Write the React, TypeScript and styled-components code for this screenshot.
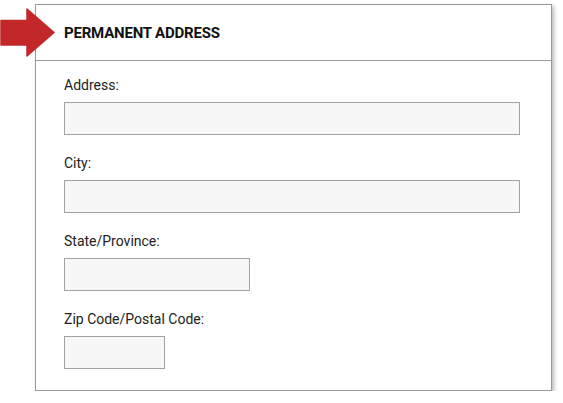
import styled, { createGlobalStyle } from "styled-components";

const GlobalStyle = createGlobalStyle`
  body {
    margin: 0;
    background: #ffffff;
    font-family: Roboto, "Liberation Sans", Arial, sans-serif;
  }
`;

interface Field {
  label: string;
  width: number | null;
}

const fields: Field[] = [
  { label: "Address:", width: null },
  { label: "City:", width: null },
  { label: "State/Province:", width: 186 },
  { label: "Zip Code/Postal Code:", width: 101 },
];

export default function App() {
  return (
    <Page>
      <GlobalStyle />
      <Arrow viewBox="0 0 55 49" aria-hidden="true">
        <path
          d="M1 12.5 H27 V1 L54 24.5 L27 48 V37 H1 Z"
          fill="#c2282a"
          stroke="#c2282a"
          strokeWidth="1.5"
          strokeLinejoin="round"
        />
      </Arrow>
      <Panel>
        <Header>
          <Title>PERMANENT ADDRESS</Title>
        </Header>
        <Body>
          {fields.map(({ label, width }) => (
            <FieldRow key={label}>
              <Label>{label}</Label>
              <TextInput type="text" $width={width} />
            </FieldRow>
          ))}
        </Body>
      </Panel>
    </Page>
  );
}

const Page = styled.div`
  position: relative;
  padding: 4px 0 0 35px;
`;

const Arrow = styled.svg`
  position: absolute;
  top: 8px;
  left: 0;
  width: 55px;
  height: 49px;
`;

const Panel = styled.section`
  width: 517px;
  box-sizing: border-box;
  border: 1px solid #9a9a9a;
  background: #ffffff;
  box-shadow: 2px 2px 4px rgba(0, 0, 0, 0.28);
`;

const Header = styled.div`
  height: 55px;
  display: flex;
  align-items: center;
  padding: 0 0 0 28px;
  border-bottom: 1px solid #9a9a9a;
`;

const Title = styled.h2`
  margin: 0;
  padding-top: 1px;
  font-size: 15px;
  font-weight: 700;
  letter-spacing: -0.2px;
  color: #111111;
`;

const Body = styled.div`
  display: flex;
  flex-direction: column;
  gap: 19px;
  padding: 15px 31px 21px 28px;
`;

const FieldRow = styled.div`
  display: flex;
  flex-direction: column;
  gap: 8px;
`;

const Label = styled.label`
  font-size: 14px;
  line-height: 18px;
  color: #222222;
`;

const TextInput = styled.input<{ $width: number | null }>`
  box-sizing: border-box;
  height: 33px;
  width: ${({ $width }) => ($width ? `${$width}px` : "100%")};
  margin: 0;
  padding: 0 8px;
  border: 1px solid #a3a3a3;
  border-radius: 0;
  background: #f7f7f7;
  outline: none;
`;
